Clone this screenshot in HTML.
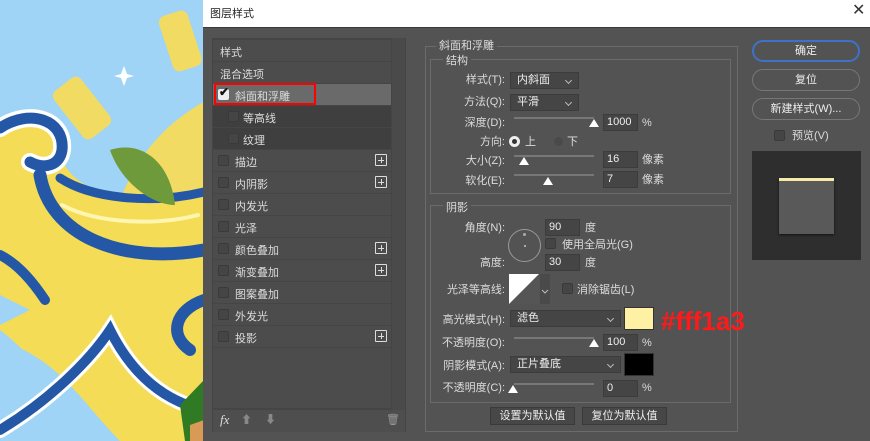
<!DOCTYPE html>
<html><head><meta charset="utf-8"><style>
*{margin:0;padding:0;box-sizing:border-box}
body{width:870px;height:441px;overflow:hidden;position:relative;background:#535353;font-family:"Liberation Sans","Noto Sans CJK SC",sans-serif;font-size:11px;color:#dcdcdc}
.a{position:absolute}
.t{position:absolute;white-space:nowrap;line-height:12px}
.r{text-align:right}
.row{position:absolute;left:213px;width:178px;height:21px;background:#4c4c4c}
.row span{position:absolute;left:22px;top:4px;white-space:nowrap}
.cb{position:absolute;width:11px;height:11px;border:1px solid #3a3a3a;background:#454545;border-radius:2px}
.row .cb{left:5px;top:5px}
.plus{position:absolute;left:162px;top:4px;width:12px;height:12px;border:1px solid #ddd;border-radius:1px}
.plus:before{content:"";position:absolute;left:2px;top:4.5px;width:6px;height:1.5px;background:#ddd}
.plus:after{content:"";position:absolute;left:4.5px;top:2px;width:1.5px;height:6px;background:#ddd}
.box{position:absolute;border:1px solid #6b6b6b}
.lg{position:absolute;background:#535353;padding:0 3px;white-space:nowrap}
.inp{position:absolute;height:17px;background:#454545;border:1px solid #3c3c3c;padding-left:3px;line-height:15px;color:#eee}
.dd{position:absolute;height:17px;background:#454545;border:1px solid #3c3c3c;padding-left:6px;line-height:15px;color:#eee}
.dd:after{content:"";position:absolute;right:7px;top:5px;width:4px;height:4px;border-right:1px solid #bbb;border-bottom:1px solid #bbb;transform:rotate(45deg)}
.sl{position:absolute;height:2px;background:#777}
.th{position:absolute;width:0;height:0;border-left:5px solid transparent;border-right:5px solid transparent;border-bottom:8px solid #fff}
.btn{position:absolute;left:752px;width:108px;height:22px;border:1px solid #777;border-radius:11px;text-align:center;line-height:20px;color:#eee}
.b2{position:absolute;height:18px;background:#474747;border:1px solid #3a3a3a;text-align:center;line-height:16px;color:#eee}
</style></head><body>
<svg class="a" style="left:0;top:0" width="204" height="441" viewBox="0 0 204 441">
<rect width="204" height="441" fill="#9fd4f6"/>
<rect x="165" y="12" width="30" height="58" rx="7" fill="#f2db63" transform="rotate(-18 180 40)"/>
<rect x="65" y="78" width="34" height="60" rx="7" fill="#f2db63" transform="rotate(-38 82 108)"/>
<path d="M124 66 L127 74 L134 76 L127 78 L124 86 L121 78 L114 76 L121 74Z" fill="#fff"/>
<circle cx="290" cy="260" r="180" fill="#f2db63"/>
<path d="M0 130 C35 110 68 125 62 160 C80 200 150 210 204 185 L204 441 L120 441 C80 400 60 360 0 340Z" fill="#f4dc56"/>
<path d="M0 330 L0 441 L95 441 C60 400 40 360 0 330Z" fill="#9fd4f6"/>
<g fill="none" stroke-linecap="round">
<path d="M0 128 C30 108 65 120 62 150 C60 165 45 170 30 162" stroke="#fff" stroke-width="18"/>
<path d="M0 128 C30 108 65 120 62 150 C60 165 45 170 30 162" stroke="#2458a6" stroke-width="11"/>
<path d="M40 175 C50 235 120 265 204 250" stroke="#2458a6" stroke-width="13"/>
<path d="M60 178 C90 198 150 205 204 192" stroke="#2458a6" stroke-width="9"/>
<path d="M0 255 C20 265 35 285 45 300" stroke="#2458a6" stroke-width="10"/>
<path d="M0 430 C50 400 90 360 110 330 C130 370 160 400 204 410" stroke="#fff" stroke-width="16"/>
<path d="M0 430 C50 400 90 360 110 330 C130 370 160 400 204 410" stroke="#2458a6" stroke-width="10"/>
<path d="M204 300 C175 310 168 335 190 350" stroke="#2458a6" stroke-width="12"/>
<path d="M62 205 C100 225 160 225 198 215" stroke="#fff6b0" stroke-width="4"/>
</g>
<path d="M0 295 L30 310 L0 325Z" fill="#9fd4f6"/>
<path d="M110 150 C140 140 170 160 175 205 C150 205 120 180 110 150Z" fill="#6e9a3c"/>
<path d="M180 405 L204 380 L204 441 L185 441Z" fill="#2f7a23"/>
<path d="M190 425 L204 420 L204 441 L190 441Z" fill="#d89a55"/>
</svg>
<div class="a" style="left:203px;top:0;width:667px;height:27px;background:#fff"></div>
<div class="t" style="left:210px;top:8px;color:#222">图层样式</div>
<div class="t" style="left:852px;top:5px;color:#333;font-size:16px">✕</div>
<div class="a" style="left:203px;top:27px;width:667px;height:414px;background:#535353;border-top:1px solid #3a3a3a"></div>
<div class="a" style="left:212px;top:38px;width:194px;height:394px;background:#454545"></div>
<div class="a" style="left:392px;top:38px;width:13px;height:372px;background:#4a4a4a"></div>
<div class="row" style="top:40px"><span style="left:7px">样式</span></div>
<div class="row" style="top:62px"><span style="left:7px">混合选项</span></div>
<div class="row" style="top:84px;background:#6a6a6a"><div class="cb" style="background:#eee;border-color:#eee"></div><span style="left:6px;top:1px;color:#111;font-size:12px;font-weight:bold">✔</span><span>斜面和浮雕</span></div>
<div class="a" style="left:214px;top:83px;width:102px;height:22px;border:2px solid #ff0000"></div>
<div class="row" style="top:106px;background:#3f3f3f"><div class="cb" style="left:15px"></div><span style="left:30px">等高线</span></div>
<div class="row" style="top:128px;background:#3f3f3f"><div class="cb" style="left:15px"></div><span style="left:30px">纹理</span></div>
<div class="row" style="top:150px"><div class="cb"></div><span>描边</span><div class="plus"></div></div>
<div class="row" style="top:172px"><div class="cb"></div><span>内阴影</span><div class="plus"></div></div>
<div class="row" style="top:194px"><div class="cb"></div><span>内发光</span></div>
<div class="row" style="top:216px"><div class="cb"></div><span>光泽</span></div>
<div class="row" style="top:238px"><div class="cb"></div><span>颜色叠加</span><div class="plus"></div></div>
<div class="row" style="top:260px"><div class="cb"></div><span>渐变叠加</span><div class="plus"></div></div>
<div class="row" style="top:282px"><div class="cb"></div><span>图案叠加</span></div>
<div class="row" style="top:304px"><div class="cb"></div><span>外发光</span></div>
<div class="row" style="top:326px"><div class="cb"></div><span>投影</span><div class="plus"></div></div>
<div class="a" style="left:213px;top:348px;width:178px;height:60px;background:#4c4c4c"></div>
<div class="a" style="left:213px;top:410px;width:192px;height:22px;background:#4e4e4e"></div>
<div class="t" style="left:220px;top:414px;font-style:italic;font-family:'Liberation Serif',serif;font-size:13px;color:#ddd">fx</div>
<div class="t" style="left:241px;top:414px;color:#888">⬆</div>
<div class="t" style="left:265px;top:414px;color:#888">⬇</div>
<div class="t" style="left:386px;top:414px;color:#999">🗑</div>
<div class="box" style="left:425px;top:46px;width:313px;height:386px"></div>
<div class="lg" style="left:436px;top:37px">斜面和浮雕</div>
<div class="box" style="left:430px;top:59px;width:301px;height:135px"></div>
<div class="lg" style="left:443px;top:52px">结构</div>
<div class="t r" style="left:440px;width:65px;top:74px">样式(T):</div>
<div class="dd" style="left:510px;top:72px;width:69px">内斜面</div>
<div class="t r" style="left:440px;width:65px;top:96px">方法(Q):</div>
<div class="dd" style="left:510px;top:94px;width:69px">平滑</div>
<div class="t r" style="left:440px;width:65px;top:117px">深度(D):</div>
<div class="sl" style="left:514px;top:117px;width:80px"></div><div class="th" style="left:589px;top:119px"></div>
<div class="inp" style="left:603px;top:114px;width:35px">1000</div><div class="t" style="left:642px;top:117px">%</div>
<div class="t r" style="left:440px;width:65px;top:136px">方向:</div>
<div class="a" style="left:509px;top:136px;width:11px;height:11px;border-radius:50%;background:#eee;border:3px solid #eee"></div>
<div class="a" style="left:512px;top:139px;width:5px;height:5px;border-radius:50%;background:#333"></div>
<div class="t" style="left:525px;top:136px">上</div>
<div class="a" style="left:553px;top:136px;width:11px;height:11px;border-radius:50%;border:1px solid #555;background:#4a4a4a"></div>
<div class="t" style="left:567px;top:136px">下</div>
<div class="t r" style="left:440px;width:65px;top:155px">大小(Z):</div>
<div class="sl" style="left:514px;top:155px;width:80px"></div><div class="th" style="left:519px;top:157px"></div>
<div class="inp" style="left:603px;top:151px;width:35px">16</div><div class="t" style="left:642px;top:154px">像素</div>
<div class="t r" style="left:440px;width:65px;top:175px">软化(E):</div>
<div class="sl" style="left:514px;top:174px;width:80px"></div><div class="th" style="left:543px;top:177px"></div>
<div class="inp" style="left:603px;top:171px;width:35px">7</div><div class="t" style="left:642px;top:174px">像素</div>
<div class="box" style="left:430px;top:205px;width:301px;height:198px"></div>
<div class="lg" style="left:443px;top:199px">阴影</div>
<div class="t r" style="left:440px;width:65px;top:222px">角度(N):</div>
<div class="a" style="left:508px;top:229px;width:33px;height:33px;border-radius:50%;border:1px solid #999"></div>
<div class="a" style="left:523px;top:233px;width:3px;height:3px;border-radius:50%;background:#aaa"></div>
<div class="a" style="left:524px;top:245px;width:2px;height:2px;background:#aaa"></div>
<div class="inp" style="left:545px;top:219px;width:35px">90</div><div class="t" style="left:585px;top:222px">度</div>
<div class="cb" style="left:545px;top:238px"></div><div class="t" style="left:562px;top:239px">使用全局光(G)</div>
<div class="t r" style="left:440px;width:65px;top:257px">高度:</div>
<div class="inp" style="left:545px;top:254px;width:35px">30</div><div class="t" style="left:585px;top:257px">度</div>
<div class="t r" style="left:440px;width:65px;top:284px">光泽等高线:</div>
<svg class="a" style="left:509px;top:274px" width="41" height="30"><rect x="0" y="0" width="30" height="30" fill="#555"/><path d="M0 30 L30 0 L0 0Z" fill="#fff"/><rect x="31" y="0" width="10" height="30" fill="#4a4a4a"/><path d="M33 16 L36 19 L39 16" stroke="#bbb" fill="none"/></svg>
<div class="cb" style="left:562px;top:283px"></div><div class="t" style="left:577px;top:284px">消除锯齿(L)</div>
<div class="t r" style="left:440px;width:65px;top:314px">高光模式(H):</div>
<div class="dd" style="left:510px;top:310px;width:111px">滤色</div>
<div class="a" style="left:624px;top:307px;width:30px;height:23px;background:#fff1a3;border:1px solid #333"></div>
<div class="t" style="left:661px;top:307px;color:#ff1a1a;font-size:26px;line-height:28px;font-weight:bold">#fff1a3</div>
<div class="t r" style="left:440px;width:65px;top:337px">不透明度(O):</div>
<div class="sl" style="left:514px;top:337px;width:80px"></div><div class="th" style="left:589px;top:339px"></div>
<div class="inp" style="left:603px;top:334px;width:35px">100</div><div class="t" style="left:642px;top:337px">%</div>
<div class="t r" style="left:440px;width:65px;top:360px">阴影模式(A):</div>
<div class="dd" style="left:510px;top:356px;width:111px">正片叠底</div>
<div class="a" style="left:624px;top:353px;width:30px;height:23px;background:#000;border:1px solid #333"></div>
<div class="t r" style="left:440px;width:65px;top:382px">不透明度(C):</div>
<div class="sl" style="left:514px;top:383px;width:80px"></div><div class="th" style="left:508px;top:385px"></div>
<div class="inp" style="left:603px;top:380px;width:35px">0</div><div class="t" style="left:642px;top:382px">%</div>
<div class="b2" style="left:490px;top:407px;width:85px">设置为默认值</div>
<div class="b2" style="left:582px;top:407px;width:85px">复位为默认值</div>
<div class="btn" style="top:40px;border:2px solid #3d72c8;line-height:18px">确定</div>
<div class="btn" style="top:69px">复位</div>
<div class="btn" style="top:98px">新建样式(W)...</div>
<div class="cb" style="left:774px;top:130px"></div><div class="t" style="left:792px;top:130px">预览(V)</div>
<div class="a" style="left:752px;top:151px;width:109px;height:109px;background:#2e2e2e"></div>
<div class="a" style="left:779px;top:178px;width:55px;height:56px;background:#595959;border-top:3px solid #f5eaa8;box-shadow:0 1px 2px #111"></div>
</body></html>
